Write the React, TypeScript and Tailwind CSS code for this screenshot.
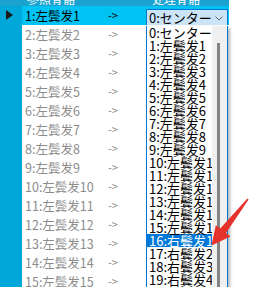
import React from 'react';

const FONT = '"Noto Sans CJK JP", "Noto Sans CJK SC", sans-serif';

const gridRows = Array.from({ length: 15 }, (_, i) => `${i + 1}:左鬓发${i + 1}`);

const options = [
  '0:センター',
  ...Array.from({ length: 15 }, (_, i) => `${i + 1}:左鬓发${i + 1}`),
  ...Array.from({ length: 4 }, (_, i) => `${i + 16}:右鬓发${i + 1}`),
];

const SELECTED_OPTION = 16;

const ComboBox: React.FC<{ value: string }> = ({ value }) => (
  <div className="mt-[3px] h-[17px] w-[82px] flex items-center justify-between border border-[#0078d7] bg-[#cce4f7] pl-[2px] pr-[4px]">
    <span className="text-[13px] leading-[13px] text-black whitespace-nowrap">{value}</span>
    <svg width="8" height="5" viewBox="0 0 8 5" className="mt-[1px]">
      <polyline points="0.5,0.5 4,4 7.5,0.5" fill="none" stroke="#606060" strokeWidth="1" />
    </svg>
  </div>
);

const DropList: React.FC = () => (
  <div className="absolute left-[146px] top-[26px] w-[82px] h-[280px] flex border-x border-[#0078d7] bg-white shadow-[2px_2px_3px_rgba(0,0,0,0.3)]">
    <div className="w-[65px] overflow-hidden">
      {options.map((opt, idx) => (
        <div
          key={idx}
          className={`h-[13px] pl-[2px] text-[13px] leading-[13px] whitespace-nowrap ${
            idx === SELECTED_OPTION ? 'bg-[#0078d7] text-white' : 'text-black'
          }`}
        >
          {opt}
        </div>
      ))}
    </div>
    <div className="w-[15px] bg-[#f0f0f0] pt-[17px] pl-[5px]">
      <div className="w-[3px] h-full bg-[#858585]" />
    </div>
  </div>
);

export default function App() {
  return (
    <div className="relative w-[273px] h-[287px] overflow-hidden bg-white" style={{ fontFamily: FONT }}>
      {/* column headers, mostly scrolled out of view */}
      <div className="flex h-[6px] w-[229px] overflow-hidden bg-[#1aa3d1] text-white text-[12px] leading-[12px]">
        <div className="w-[22px]" />
        <div className="w-[124px] pl-[5px] -mt-[7px] whitespace-nowrap">参照骨骼</div>
        <div className="w-[83px] pl-[6px] -mt-[7px] whitespace-nowrap">处理骨骼</div>
      </div>

      {gridRows.map((label, i) => {
        const selected = i === 0;
        return (
          <div key={i} className="flex h-[19px]">
            <div className="w-[22px] h-full bg-[#00a8da] flex items-center pl-[6px]">
              {selected && (
                <svg width="7" height="10" viewBox="0 0 7 10" className="-mt-[2px]">
                  <polygon points="0,0 7,5 0,10" fill="#1a1a1a" />
                </svg>
              )}
            </div>
            <div className={`flex w-[207px] h-full ${selected ? 'bg-[#00c3f3]' : 'bg-white'}`}>
              <div
                className={`w-[82px] pl-[3px] text-[12.5px] leading-[19px] whitespace-nowrap ${
                  selected ? 'text-black' : 'text-[#8c8c8c]'
                }`}
              >
                {label}
              </div>
              <div
                className={`w-[42px] pl-[4px] text-[11px] leading-[19px] ${
                  selected ? 'text-black' : 'text-[#8c8c8c]'
                }`}
              >
                -&gt;
              </div>
              <div className="w-[83px]">{selected && <ComboBox value="0:センター" />}</div>
            </div>
          </div>
        );
      })}

      <DropList />

      {/* red annotation arrow */}
      <svg className="absolute inset-0 pointer-events-none" width="273" height="287" viewBox="0 0 273 287">
        <polygon
          points="248.6,199.4 226,233 230.5,236.5 211.5,245.5 215.8,225.2 220.2,228.6 247.4,198.6"
          fill="#e5322a"
        />
      </svg>
    </div>
  );
}
